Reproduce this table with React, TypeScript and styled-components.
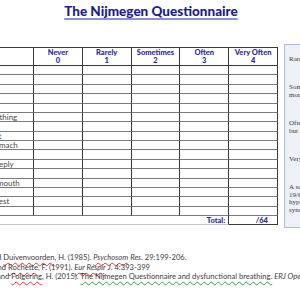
import React from "react";
import styled, { createGlobalStyle } from "styled-components";

const GlobalStyle = createGlobalStyle`
  html, body {
    margin: 0;
    padding: 0;
    background: #ffffff;
  }
  body {
    width: 300px;
    height: 300px;
    overflow: hidden;
    font-family: Lato, "Liberation Sans", sans-serif;
  }
`;

const Page = styled.div`
  width: 300px;
  height: 300px;
  overflow: hidden;
  display: flex;
  flex-direction: column;
`;

const Title = styled.h1`
  margin: 3px 0 0;
  padding-left: 2px;
  text-align: center;
  font-size: 13.5px;
  font-weight: 900;
  line-height: 16px;
  color: #1c1c8a;
  text-decoration: underline;
  text-decoration-color: #8d8fd8;
  text-decoration-thickness: 2px;
  text-underline-offset: 2px;
`;

const Sheet = styled.div`
  display: flex;
  align-items: flex-start;
  gap: 6px;
  margin: 25px 0 0 -81px;
`;

const Grid = styled.div`
  flex-shrink: 0;
  margin-top: 3px;
  width: 358px;
  display: grid;
  grid-template-columns: 114px repeat(5, 1fr);
  grid-template-rows: 18px repeat(16, 9.375px) 9px;
  border-top: 1px solid #3a3a3a;
  border-left: 1px solid #3a3a3a;
`;

const Cell = styled.div<{ $line?: string }>`
  border-right: 1px solid #3a3a3a;
  border-bottom: 1px solid ${(p) => p.$line || "#7a7a7a"};
  min-width: 0;
`;

const HeadCell = styled(Cell)`
  display: flex;
  flex-direction: column;
  align-items: center;
  justify-content: center;
  font-size: 7.5px;
  font-weight: 900;
  line-height: 8px;
  color: #2a2a96;
`;

const LabelCell = styled(Cell)`
  display: flex;
  align-items: center;
  padding-left: 5px;
  font-size: 8px;
  color: #4a4a4a;
  white-space: nowrap;
  overflow: visible;
`;

const TotalCell = styled(Cell)<{ $span?: number; $pad: number }>`
  grid-column: span ${(p) => p.$span || 1};
  display: flex;
  align-items: center;
  justify-content: flex-end;
  padding-right: ${(p) => p.$pad}px;
  font-size: 7.5px;
  font-weight: 900;
  color: #2a2a96;
`;

const Legend = styled.aside`
  flex-shrink: 0;
  width: 100px;
  height: 184px;
  box-sizing: border-box;
  padding: 11px 4px 14px;
  display: flex;
  flex-direction: column;
  gap: 21px;
  background: #edf1f7;
  border: 1px solid #a6c0de;
  font-family: "Liberation Serif", serif;
  font-size: 7px;
  line-height: 7.4px;
  color: #3a3a3a;
`;

const LegendText = styled.p`
  margin: 0;
  white-space: nowrap;
`;

const Refs = styled.div`
  margin: 25px 0 0;
  font-size: 7.6px;
  line-height: 9.5px;
  color: #3d3d3d;
  white-space: nowrap;
`;

const RefLine = styled.div<{ $shift: number }>`
  margin-left: ${(p) => p.$shift}px;
`;

const Misspelt = styled.span<{ $italic?: boolean }>`
  font-style: ${(p) => (p.$italic ? "italic" : "normal")};
  text-decoration: underline wavy #e0383a;
  text-decoration-thickness: 1px;
  text-underline-offset: 1.5px;
`;

const Grammar = styled.span`
  text-decoration: underline wavy #3aa655;
  text-decoration-thickness: 1px;
  text-underline-offset: 1.5px;
`;

const Em = styled.span`
  font-style: italic;
`;

const headers = [
  ["Never", "0"],
  ["Rarely", "1"],
  ["Sometimes", "2"],
  ["Often", "3"],
  ["Very Often", "4"],
];

const items = [
  "Chest pain",
  "Feeling tense",
  "Blurred vision",
  "Dizzy spells",
  "Feeling confused",
  "Faster or deeper breathing",
  "Short of breath",
  "Tight feelings in chest",
  "Bloated feeling in stomach",
  "Tingling fingers",
  "Unable to breathe deeply",
  "Stiff fingers or arms",
  "Tight feelings round mouth",
  "Cold hands or feet",
  "Heart pounding in chest",
  "Feeling of anxiety",
];

export default function App() {
  return (
    <Page>
      <GlobalStyle />
      <Title>The Nijmegen Questionnaire</Title>
      <Sheet>
        <Grid>
          <Cell $line="#3a3a3a" />
          {headers.map(([label, score]) => (
            <HeadCell key={label} $line="#3a3a3a">
              <span>{label}</span>
              <span>{score}</span>
            </HeadCell>
          ))}
          {items.map((item) => (
            <React.Fragment key={item}>
              <LabelCell>{item}</LabelCell>
              {headers.map(([label]) => (
                <Cell key={label} />
              ))}
            </React.Fragment>
          ))}
          <TotalCell $span={5} $pad={3} $line="#c8c8c8">
            Total:
          </TotalCell>
          <TotalCell $pad={9} $line="#3a3a3a">
            /64
          </TotalCell>
        </Grid>
        <Legend>
          <LegendText>Rarely = a few times a year</LegendText>
          <LegendText>
            Sometimes = a few times
            <br />
            month
          </LegendText>
          <LegendText>
            Often = a few times a week
            <br />
            but not every day
          </LegendText>
          <LegendText>Very often = every day</LegendText>
          <LegendText>
            A score of more than
            <br />
            19/64 suggests
            <br />
            hyperventilation
            <br />
            syndrome
          </LegendText>
        </Legend>
      </Sheet>
      <Refs>
        <RefLine $shift={-67}>
          Van Dixhoorn, J. and <Misspelt>Duivenvoorden</Misspelt>, H. (1985).{" "}
          <Misspelt $italic>Psychosom</Misspelt> <Em>Res</Em>. 29:199-206.
        </RefLine>
        <RefLine $shift={-63}>
          Vansteenkiste, J. and <Misspelt>Rochette</Misspelt>, F. (1991).{" "}
          <Misspelt $italic>Eur Respir</Misspelt> <Em>J</Em>. 4:393-399
        </RefLine>
        <RefLine $shift={-59}>
          Van Dixhoorn, J. and <Misspelt>Folgering</Misspelt>, H. (2015).{" "}
          <Grammar>The Nijmegen Questionnaire and dysfunctional breathing.</Grammar>{" "}
          <Em>ERJ Open Res</Em>
        </RefLine>
      </Refs>
    </Page>
  );
}
